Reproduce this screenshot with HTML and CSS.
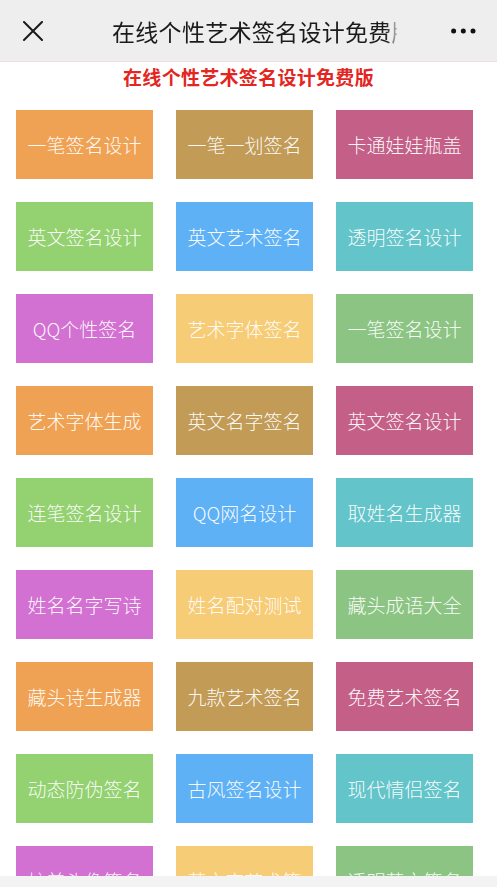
FILE: index.html
```html
<!DOCTYPE html>
<html lang="zh-CN">
<head>
<meta charset="utf-8">
<title>在线个性艺术签名设计免费版</title>
<link rel="stylesheet" href="styles.css">
</head>
<body>
<header class="topbar">
  <svg class="close" viewBox="0 0 20 20" width="20" height="20"><path d="M1 1L19 19M19 1L1 19" stroke="#1a1a1a" stroke-width="2" stroke-linecap="round" fill="none"/></svg>
  <div class="title">在线个性艺术签名设计免费版</div>
  <svg class="more" viewBox="0 0 25 6" width="25" height="6"><circle cx="2.6" cy="3" r="2.5" fill="#111"/><circle cx="12.3" cy="3" r="2.5" fill="#111"/><circle cx="22" cy="3" r="2.5" fill="#111"/></svg>
</header>
<h1 class="page-title">在线个性艺术签名设计免费版</h1>
<main class="grid">
  <a class="tile c-orange">一笔签名设计</a>
  <a class="tile c-tan">一笔一划签名</a>
  <a class="tile c-pink">卡通娃娃瓶盖</a>
  <a class="tile c-green">英文签名设计</a>
  <a class="tile c-blue">英文艺术签名</a>
  <a class="tile c-teal">透明签名设计</a>
  <a class="tile c-purple">QQ个性签名</a>
  <a class="tile c-yellow">艺术字体签名</a>
  <a class="tile c-sage">一笔签名设计</a>
  <a class="tile c-orange">艺术字体生成</a>
  <a class="tile c-tan">英文名字签名</a>
  <a class="tile c-pink">英文签名设计</a>
  <a class="tile c-green">连笔签名设计</a>
  <a class="tile c-blue">QQ网名设计</a>
  <a class="tile c-teal">取姓名生成器</a>
  <a class="tile c-purple">姓名名字写诗</a>
  <a class="tile c-yellow">姓名配对测试</a>
  <a class="tile c-sage">藏头成语大全</a>
  <a class="tile c-orange">藏头诗生成器</a>
  <a class="tile c-tan">九款艺术签名</a>
  <a class="tile c-pink">免费艺术签名</a>
  <a class="tile c-green">动态防伪签名</a>
  <a class="tile c-blue">古风签名设计</a>
  <a class="tile c-teal">现代情侣签名</a>
  <a class="tile c-purple">炫美头像签名</a>
  <a class="tile c-yellow">英文字艺术签</a>
  <a class="tile c-sage">透明英文签名</a>
</main>
<div class="bottombar"></div>
</body>
</html>
```
FILE: styles.css
```css
html, body {
  margin: 0;
  padding: 0;
  background: #fff;
  font-family: "Noto Sans CJK SC", "Noto Sans", sans-serif;
}

.topbar {
  display: flex;
  align-items: center;
  height: 61px;
  background: #efeeee;
  border-bottom: 1px solid #f3dcdc;
}

.close {
  margin-left: 23px;
  flex: none;
}

.title {
  margin-left: 69px;
  width: 285px;
  overflow: hidden;
  white-space: nowrap;
  font-size: 23px;
  letter-spacing: 0.3px;
  color: #1b1b1b;
  line-height: 30px;
  -webkit-mask-image: linear-gradient(to right, #000 96%, rgba(0,0,0,0.25) 100%);
  mask-image: linear-gradient(to right, #000 96%, rgba(0,0,0,0.25) 100%);
}

.more {
  margin-left: auto;
  margin-right: 21px;
  flex: none;
}

.page-title {
  margin: 0 0 18px;
  height: 30px;
  line-height: 30px;
  text-align: center;
  font-size: 19px;
  letter-spacing: 0.3px;
  font-weight: bold;
  color: #e3261f;
}

.grid {
  display: grid;
  grid-template-columns: repeat(3, 137px);
  grid-auto-rows: 69px;
  column-gap: 23px;
  row-gap: 23px;
  padding-left: 16px;
}

.tile {
  display: flex;
  align-items: center;
  justify-content: center;
  color: rgba(255, 255, 255, 0.96);
  font-size: 19px;
  font-weight: 300;
  white-space: nowrap;
  overflow: hidden;
  text-decoration: none;
}

.c-orange { background: #f0a254; }
.c-tan { background: #c29b57; }
.c-pink { background: #c45f87; }
.c-green { background: #93d171; }
.c-blue { background: #5fb1f6; }
.c-teal { background: #63c4ca; }
.c-purple { background: #d371d2; }
.c-yellow { background: #f7cc76; }
.c-sage { background: #8cc483; }

.bottombar {
  position: fixed;
  left: 0;
  right: 0;
  bottom: 0;
  height: 11px;
  background: #f3f3f3;
}
```
